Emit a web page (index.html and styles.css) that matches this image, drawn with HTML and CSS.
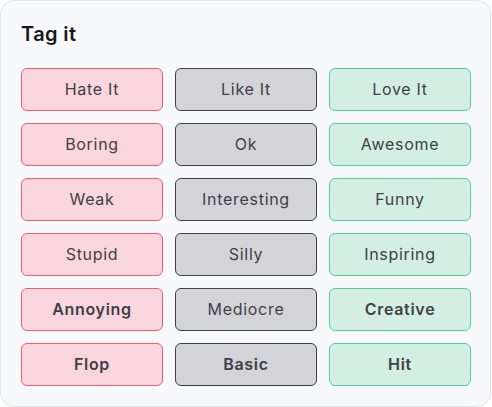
FILE: index.html
```html
<!DOCTYPE html>
<html>
<head>
<meta charset="utf-8">
<link rel="stylesheet" href="styles.css">
</head>
<body>
<div class="card">
  <h1 class="title">Tag it</h1>
  <div class="grid">
    <button class="tag bad">Hate It</button>
    <button class="tag meh">Like It</button>
    <button class="tag good">Love It</button>
    <button class="tag bad">Boring</button>
    <button class="tag meh">Ok</button>
    <button class="tag good">Awesome</button>
    <button class="tag bad">Weak</button>
    <button class="tag meh">Interesting</button>
    <button class="tag good">Funny</button>
    <button class="tag bad">Stupid</button>
    <button class="tag meh">Silly</button>
    <button class="tag good">Inspiring</button>
    <button class="tag bad strong">Annoying</button>
    <button class="tag meh">Mediocre</button>
    <button class="tag good strong">Creative</button>
    <button class="tag bad strong">Flop</button>
    <button class="tag meh strong">Basic</button>
    <button class="tag good strong">Hit</button>
  </div>
</div>
</body>
</html>
```

FILE: styles.css
```css
* { box-sizing: border-box; }
html, body { margin: 0; padding: 0; background: #ffffff; }
body { font-family: Inter, "DejaVu Sans", sans-serif; }
.card {
  width: 491px;
  height: 407px;
  background: #f8f9fd;
  border: 1px solid #e2e4ea;
  border-radius: 14px;
  padding: 21px 19px 20px 20px;
}
.title {
  margin: 0 0 22px 0;
  font-size: 20px;
  line-height: 24px;
  font-weight: 600;
  letter-spacing: 0.4px;
  color: #18181b;
}
.grid {
  display: grid;
  grid-template-columns: repeat(3, 142px);
  grid-auto-rows: 43px;
  gap: 12px;
}
.tag {
  font-family: inherit;
  font-size: 16px;
  letter-spacing: 0.7px;
  color: #3f3f46;
  border-radius: 6px;
  border: 1.5px solid;
  padding: 0 0 2px 0;
  display: flex;
  align-items: center;
  justify-content: center;
}
.bad { background: #f9d6dd; border-color: #f25d6e; }
.meh { background: #d4d4d8; border-color: #3f3f46; }
.good { background: #d3efe4; border-color: #4dd39b; }
.strong { font-weight: 600; }
```
